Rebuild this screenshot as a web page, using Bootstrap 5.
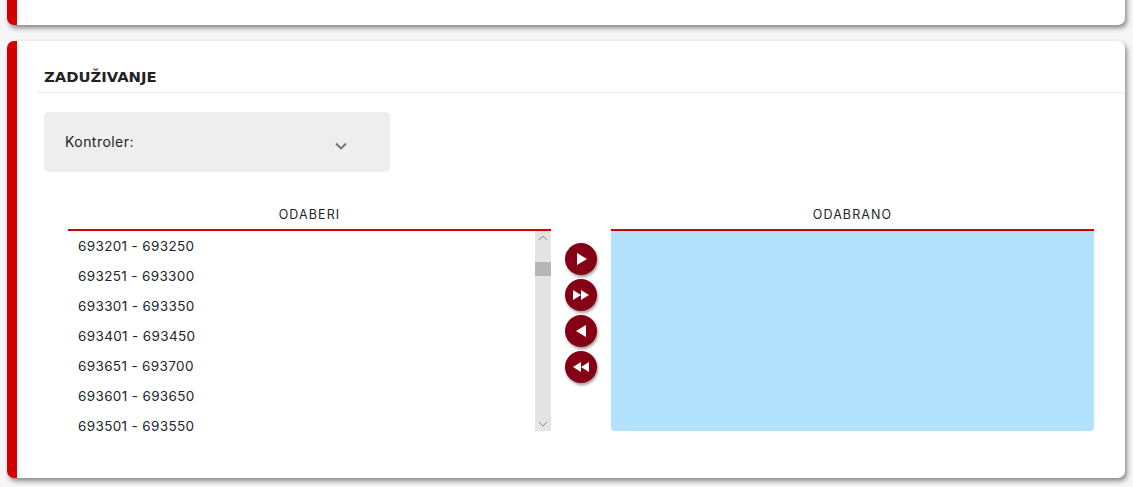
<!DOCTYPE html>
<html lang="en">
  <head>
    <meta charset="UTF-8" />
    <title>Zaduživanje</title>
    <link
      href="https://cdn.jsdelivr.net/npm/bootstrap@5.3.0/dist/css/bootstrap.min.css"
      rel="stylesheet"
    />
    <style>
      html, body { height: 487px; overflow: hidden; }
      body { background: #f6f6f6; font-family: Inter, "Liberation Sans", sans-serif; color: #212529; }
      .sheet { margin: 0 8px 0 7px; background: #fff; border: 0; border-left: 10px solid #d40000; border-radius: 7px; box-shadow: 2px 3px 5px rgba(0, 0, 0, .45); }
      .sheet-top { height: 40px; margin-top: -15px; margin-bottom: 16px; }
      .sheet-main { height: 437px; }
      .sheet-head { margin-left: 20px; height: 52px; padding: 27px 0 0 7px; border-bottom: 1px solid #ececec; font-family: "DejaVu Sans", sans-serif; font-weight: 700; font-size: 14.8px; line-height: 18px; color: #222; }
      .pick-box { width: 346px; height: 60px; margin: 19px 0 0 27px; padding: 0 43px 0 21px; background: #eee; border-radius: 5px; font-size: 14px; letter-spacing: .45px; }
      .pick-box span { margin-bottom: 2px; }
      .pick-box svg { margin-top: 7px; }
      .swap { margin: 33px 31px 0 51px; }
      .swap-col { width: 483px; }
      .swap-title { height: 26px; line-height: 20px; text-align: center; font-size: 12.5px; letter-spacing: 1.1px; border-bottom: 2px solid #d40000; }
      .swap-list { height: 200px; }
      .swap-rows { padding-left: 10px; font-size: 13.5px; letter-spacing: .35px; }
      .swap-rows div { height: 30px; line-height: 30px; }
      .fake-bar { width: 16px; background: #e4e4e4; }
      .fake-thumb { height: 14px; margin-top: 21px; background: #b6b6b6; }
      .swap-btns { width: 60px; padding-top: 38px; gap: 4px; }
      .round-btn { width: 32px; height: 32px; padding: 0; border: 0; border-radius: 50%; background: #850014; box-shadow: 1px 2px 3px rgba(0, 0, 0, .4); }
      .picked { height: 200px; background: #b3e2ff; border-radius: 0 0 4px 4px; }
    </style>
  </head>
  <body>
    <div class="card sheet sheet-top"></div>
    <div class="card sheet sheet-main">
      <div class="sheet-head">ZADUŽIVANJE</div>
      <div class="pick-box d-flex align-items-center justify-content-between">
        <span>Kontroler:</span>
        <svg width="12" height="8" viewBox="0 0 12 8"><path d="M1 1.5l5 5 5-5" fill="none" stroke="#6b7473" stroke-width="1.8" /></svg>
      </div>
      <div class="swap d-flex">
        <div class="swap-col">
          <div class="swap-title">ODABERI</div>
          <div class="swap-list d-flex">
            <div class="swap-rows flex-grow-1">
              <div>693201 - 693250</div>
              <div>693251 - 693300</div>
              <div>693301 - 693350</div>
              <div>693401 - 693450</div>
              <div>693651 - 693700</div>
              <div>693601 - 693650</div>
              <div>693501 - 693550</div>
            </div>
            <div class="fake-bar d-flex flex-column align-items-center">
              <svg class="mt-1" width="10" height="6" viewBox="0 0 10 6"><path d="M1 5l4-4 4 4" fill="none" stroke="#8a8a8a" /></svg>
              <div class="fake-thumb w-100"></div>
              <svg class="mt-auto mb-1" width="10" height="6" viewBox="0 0 10 6"><path d="M1 1l4 4 4-4" fill="none" stroke="#8a8a8a" /></svg>
            </div>
          </div>
        </div>
        <div class="swap-btns d-flex flex-column align-items-center">
          <button class="round-btn" type="button"><svg class="d-block mx-auto" width="12" height="12" viewBox="0 0 12 12"><path d="M2 0l10 6-10 6z" fill="#fff" /></svg></button>
          <button class="round-btn" type="button"><svg class="d-block mx-auto" width="16" height="10" viewBox="0 0 16 10"><path d="M0 0l8 5-8 5zM8 0l8 5-8 5z" fill="#fff" /></svg></button>
          <button class="round-btn" type="button"><svg class="d-block mx-auto" width="10" height="12" viewBox="0 0 10 12"><path d="M10 0L0 6l10 6z" fill="#fff" /></svg></button>
          <button class="round-btn" type="button"><svg class="d-block mx-auto" width="16" height="10" viewBox="0 0 16 10"><path d="M8 0L0 5l8 5zM16 0L8 5l8 5z" fill="#fff" /></svg></button>
        </div>
        <div class="swap-col">
          <div class="swap-title">ODABRANO</div>
          <div class="picked"></div>
        </div>
      </div>
    </div>
    <script src="https://cdn.jsdelivr.net/npm/bootstrap@5.3.0/dist/js/bootstrap.bundle.min.js"></script>
  </body>
</html>
